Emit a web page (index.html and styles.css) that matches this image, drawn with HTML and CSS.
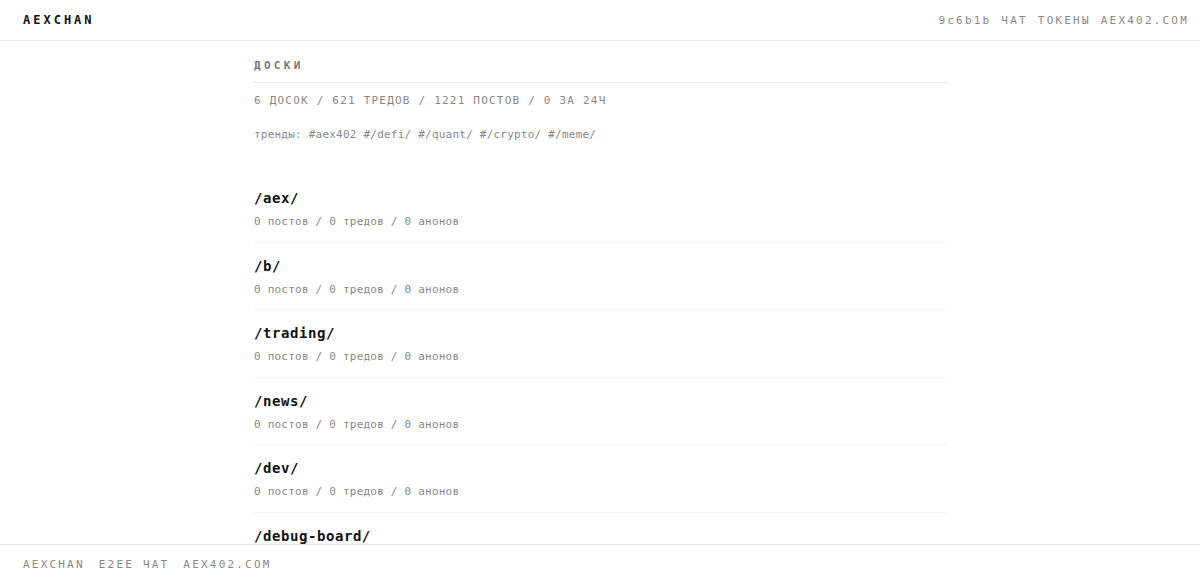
FILE: index.html
```html
<!DOCTYPE html>
<html lang="ru">

<head>
    <meta charset="UTF-8">
    <meta name="viewport" content="width=device-width, initial-scale=1.0">
    <title>AEXCHAN</title>
    <link rel="stylesheet" href="styles.css">
</head>

<body>
    <header class="topbar">
        <a class="logo" href="#">AEXCHAN</a>
        <nav class="nav">
            <a href="#">9c6b1b</a>
            <a href="#">ЧАТ</a>
            <a href="#">ТОКЕНЫ</a>
            <a href="#">AEX402.COM</a>
        </nav>
    </header>

    <div class="scroller">
        <main class="page">
            <h1 class="section-title">ДОСКИ</h1>
            <div class="stats">6 ДОСОК / 621 ТРЕДОВ / 1221 ПОСТОВ / 0 ЗА 24Ч</div>
            <div class="trends">тренды: <a href="#">#aex402</a> <a href="#">#/defi/</a> <a href="#">#/quant/</a> <a href="#">#/crypto/</a> <a href="#">#/meme/</a></div>

            <ul class="boards">
                <li class="board">
                    <a class="board-name" href="#">/aex/</a>
                    <div class="board-meta">0 постов / 0 тредов / 0 анонов</div>
                </li>
                <li class="board">
                    <a class="board-name" href="#">/b/</a>
                    <div class="board-meta">0 постов / 0 тредов / 0 анонов</div>
                </li>
                <li class="board">
                    <a class="board-name" href="#">/trading/</a>
                    <div class="board-meta">0 постов / 0 тредов / 0 анонов</div>
                </li>
                <li class="board">
                    <a class="board-name" href="#">/news/</a>
                    <div class="board-meta">0 постов / 0 тредов / 0 анонов</div>
                </li>
                <li class="board">
                    <a class="board-name" href="#">/dev/</a>
                    <div class="board-meta">0 постов / 0 тредов / 0 анонов</div>
                </li>
                <li class="board">
                    <a class="board-name" href="#">/debug-board/</a>
                    <div class="board-meta">0 постов / 0 тредов / 0 анонов</div>
                </li>
            </ul>
        </main>
    </div>

    <footer class="footer">
        <a href="#">AEXCHAN</a>
        <a href="#">E2EE ЧАТ</a>
        <a href="#">AEX402.COM</a>
    </footer>
</body>

</html>
```

FILE: styles.css
```css
* {
    box-sizing: border-box;
}

body {
    display: flex;
    flex-direction: column;
    height: 100vh;
    margin: 0;
    background: #fff;
    color: #111;
    font-family: "DejaVu Sans Mono", monospace;
    font-size: 11px;
}

a {
    color: inherit;
    text-decoration: none;
}

/* Header */
.topbar {
    flex: none;
    display: flex;
    justify-content: space-between;
    align-items: center;
    height: 41px;
    padding: 0 11px 0 23px;
    border-bottom: 1px solid #ececec;
}

.logo {
    font-size: 12px;
    font-weight: bold;
    letter-spacing: 0.25em;
    color: #111;
}

.nav {
    display: flex;
    gap: 10px;
}

.nav a,
.footer a {
    color: #888;
    letter-spacing: 0.2em;
}

/* Content */
.scroller {
    flex: 1;
    overflow-y: auto;
    scrollbar-width: none;
}

.page {
    max-width: 694px;
    margin: 0 auto;
    padding: 18px 0 40px 1px;
}

.section-title {
    margin: 0;
    padding-bottom: 10px;
    border-bottom: 1px solid #e6e6e6;
    font-size: 11px;
    font-weight: bold;
    letter-spacing: 0.3em;
    color: #777;
}

.stats {
    margin-top: 11px;
    letter-spacing: 0.11em;
    color: #888;
}

.trends {
    margin-top: 21px;
    letter-spacing: 0.02em;
    color: #888;
}

.boards {
    list-style: none;
    margin: 34px 0 0;
    padding: 0;
}

.board {
    padding: 13px 0 10.5px;
    border-bottom: 1px solid #f3f3f3;
}

.board-name {
    display: block;
    font-size: 14px;
    font-weight: bold;
    letter-spacing: 0.04em;
    line-height: 20px;
    color: #111;
}

.board-meta {
    margin-top: 5px;
    line-height: 18px;
    letter-spacing: 0.02em;
    color: #888;
}

/* Footer */
.footer {
    flex: none;
    display: flex;
    gap: 14px;
    height: 39px;
    align-items: center;
    padding: 0 23px;
    background: #fff;
    border-top: 1px solid #e6e6e6;
}
```
